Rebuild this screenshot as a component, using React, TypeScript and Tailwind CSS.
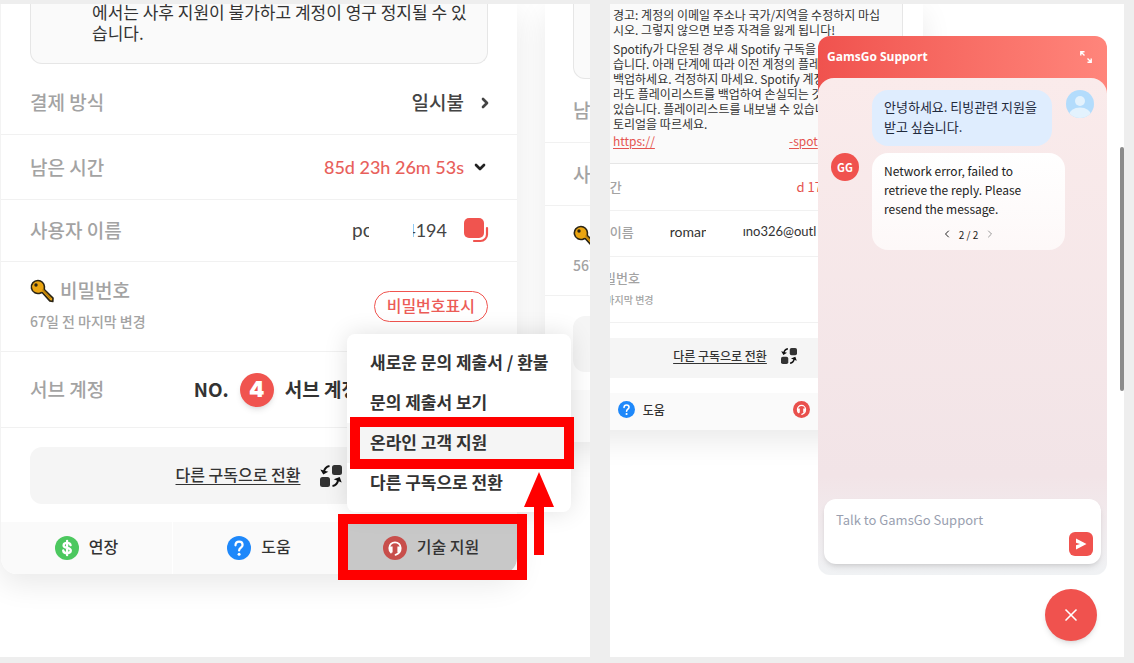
import { type ReactNode } from 'react'
import { ChevronDown, ChevronLeft, ChevronRight, X } from 'lucide-react'

function KeyIcon({ className }: { className: string }) {
  return (
    <svg viewBox="0 0 24 24" className={className} aria-hidden="true">
      <path
        d="M8 1.5a6.5 6.5 0 1 0 2.6 12.4l1.6-.4 7.6 8.4 3 .6.2-3.400-8.700-8.600.1-3A6.500 6.500 0 0 0 8 1.500z"
        fill="#eba510"
        stroke="#2a2415"
        strokeWidth="1.6"
        strokeLinejoin="round"
      />
      <path d="M12.500 10.500l8 9" stroke="#b87d08" strokeWidth="1.200" />
      <circle cx="6" cy="6" r="1.700" fill="#2a2415" />
    </svg>
  )
}

function SwapIcon({ className }: { className: string }) {
  return (
    <svg viewBox="0 0 22 22" className={className} aria-hidden="true">
      <rect x="12" y="0" width="10" height="10" rx="2.500" fill="#333" />
      <rect x="0" y="12" width="10" height="10" rx="2.500" fill="#333" />
      <path d="M9.500 1C6.500 1.500 4.500 3.500 3.800 7" fill="none" stroke="#111" strokeWidth="2" />
      <path d="M.3 4.500l3 5 5-2.800z" fill="#111" />
      <path d="M12.500 21c3-.5 5-2.500 5.700-6" fill="none" stroke="#111" strokeWidth="2" />
      <path d="M21.700 17.500l-2-5.500-6 2.300z" fill="#111" />
    </svg>
  )
}

function CopyIcon() {
  return (
    <svg viewBox="0 0 25 25" className="size-[25px]" aria-hidden="true">
      <rect x="0" y="0" width="20" height="20" rx="5" fill="#f0544f" />
      <path d="M23 10v6.500a6.500 6.500 0 0 1-6.500 6.500H10" fill="none" stroke="#f0544f" strokeWidth="2.200" strokeLinecap="round" />
    </svg>
  )
}

function DollarIcon({ className }: { className: string }) {
  return (
    <svg viewBox="0 0 24 24" className={className} aria-hidden="true">
      <circle cx="12" cy="12" r="12" fill="#4cc85f" />
      <path
        d="M15.600 9.200c-.3-1.500-1.700-2.300-3.500-2.300-2 0-3.500.9-3.500 2.500 0 3.500 7.200 1.600 7.200 5.200 0 1.700-1.700 2.600-3.700 2.600-2.100 0-3.700-1-3.900-2.700M12.100 4.800v14.400"
        fill="none"
        stroke="#fff"
        strokeWidth="2.300"
        strokeLinecap="round"
      />
    </svg>
  )
}

function HelpIcon({ className }: { className: string }) {
  return (
    <svg viewBox="0 0 24 24" className={className} aria-hidden="true">
      <circle cx="12" cy="12" r="12" fill="#1e88fa" />
      <path d="M8.500 9.300c0-2.200 1.500-3.700 3.600-3.700s3.500 1.400 3.500 3.300c0 2.600-3.500 2.700-3.500 5.600" fill="none" stroke="#fff" strokeWidth="2.200" strokeLinecap="round" />
      <circle cx="12.100" cy="18.300" r="1.500" fill="#fff" />
    </svg>
  )
}

function SupportIcon({ className, fill }: { className: string; fill: string }) {
  return (
    <svg viewBox="0 0 24 24" className={className} aria-hidden="true">
      <circle cx="12" cy="12" r="12" fill={fill} />
      <path d="M8 16.500C6.500 15.500 6.300 14 6.300 12a5.700 5.700 0 0 1 11.400 0c0 3-1.700 5.700-5.200 6.800" fill="none" stroke="#fff" strokeWidth="1.800" strokeLinecap="round" />
      <path d="M7 10.500h2.600v6C7.800 16.300 7 15 7 13.500zM14.400 10.500H17v3c0 1.500-.8 2.800-2.600 3z" fill="#fff" />
    </svg>
  )
}

function Row({ className, label, children }: { className: string; label: ReactNode; children?: ReactNode }) {
  return (
    <div className={`flex items-center justify-between border-b border-[#f1f1f1] ${className}`}>
      <div className="text-[#a3a3a3] font-medium whitespace-nowrap">{label}</div>
      {children}
    </div>
  )
}

const cardShadow = 'shadow-[0_10px_30px_rgba(0,0,0,0.09)]'

const menuItems = ['새로운 문의 제출서 / 환불', '문의 제출서 보기', '온라인 고객 지원', '다른 구독으로 전환']

function SupportMenu() {
  return (
    <ul className="absolute bottom-full -right-[54px] z-10 mb-[10px] w-56 rounded-lg bg-white py-[9px] shadow-[0_0_24px_rgba(0,0,0,0.12)]">
      {menuItems.map((item, i) => (
        <li key={item} className="relative">
          <button
            className={`h-10 w-full pb-[3px] pl-[23px] text-left text-[17px] font-bold whitespace-nowrap text-[#333] ${i === 2 ? 'bg-[#f5f5f5]' : ''}`}
          >
            {item}
          </button>
          {i === 2 && <span className="absolute -inset-y-[6px] left-[3px] -right-[3px] z-10 border-10 border-[#f00]" />}
        </li>
      ))}
    </ul>
  )
}

function AccountCard() {
  return (
    <article className={`relative z-10 w-[517px] shrink-0 rounded-b-2xl border-l border-[#f3f3f3] bg-white ${cardShadow}`}>
      <div className="mr-[29px] mb-[7px] ml-[29px] flex h-15 items-end rounded-b-xl border border-t-0 border-[#e6e6e6] bg-[#fafafa] pb-5 pl-[61px]">
        <p className="text-[17px] leading-[21px] whitespace-nowrap text-[#333]">
          에서는 사후 지원이 불가하고 계정이 영구 정지될 수 있
          <br />
          습니다.
        </p>
      </div>
      <Row className="h-16 pr-6 pl-[29px] text-[19px]" label="결제 방식">
        <button className="flex items-center gap-[13px] font-medium text-[#444]">
          일시불
          <ChevronRight className="size-4" strokeWidth={4} />
        </button>
      </Row>
      <Row className="h-[65px] pr-[29px] pl-[29px] text-[19px]" label="남은 시간">
        <button className="flex items-center gap-2 font-['Lato',sans-serif] text-[18px] font-medium text-[#e8605b]">
          85d 23h 26m 53s
          <ChevronDown className="size-4 text-[#222]" strokeWidth={4} />
        </button>
      </Row>
      <Row className="h-[62px] pr-7 pl-[29px] text-[19px]" label="사용자 이름">
        <div className="flex items-center font-['Lato',sans-serif] text-[#444]">
          <span className="mr-11 w-[17px] overflow-hidden">po</span>
          <span className="mr-[17px] flex w-[34px] justify-end overflow-hidden text-[18px]">4194</span>
          <button aria-label="복사">
            <CopyIcon />
          </button>
        </div>
      </Row>
      <Row
        className="h-[90px] pr-[29px] pl-[29px] text-[19px]"
        label={
          <>
            <div className="flex items-center gap-[6px]">
              <KeyIcon className="size-6" />
              비밀번호
            </div>
            <div className="text-sm leading-8">67일 전 마지막 변경</div>
          </>
        }
      >
        <button className="h-[31px] rounded-full border border-[#f0544f] px-3 pb-1 text-base font-medium text-[#ec5c57]">비밀번호표시</button>
      </Row>
      <Row className="h-[76px] pr-[158px] pl-[29px] text-[19px]" label="서브 계정">
        <div className="flex items-center gap-[11px] font-bold text-[#333]">
          NO.
          <span className="flex size-[34px] items-center justify-center rounded-full bg-[#f0544f] font-['Inter',sans-serif] text-[22px] font-black text-white shadow-md">
            4
          </span>
          서브 계정
        </div>
      </Row>
      <button className="mx-[29px] mt-[19px] mb-[18px] flex h-[57px] w-[458px] items-center justify-center gap-5 rounded-xl bg-[#f5f5f5] text-base font-medium text-[#333]">
        <span className="pb-1 underline underline-offset-3">다른 구독으로 전환</span>
        <SwapIcon className="size-[22px]" />
      </button>
      <footer className="grid h-13 grid-cols-3 rounded-b-2xl bg-[#fafafa] text-base font-medium text-[#333]">
        <button className="flex items-center justify-center gap-[10px] border-r border-white">
          <DollarIcon className="size-6" />
          <span className="pb-1">연장</span>
        </button>
        <button className="flex items-center justify-center gap-[10px]">
          <HelpIcon className="size-6" />
          <span className="pb-1">도움</span>
        </button>
        <div className="relative">
          <button className="flex size-full items-center justify-center gap-[10px] rounded-br-2xl bg-[#c8c8c8]">
            <SupportIcon className="size-6" fill="#c84e4b" />
            <span className="pb-1">기술 지원</span>
          </button>
          <SupportMenu />
          <span className="absolute -top-2 -right-[10px] -bottom-[6px] -left-[7px] z-10 border-10 border-[#f00]" />
          <svg viewBox="0 0 30 83" className="absolute -right-[37px] bottom-[19px] z-20 h-[83px] w-[30px]" aria-hidden="true">
            <path d="M15 0l15 35H20v48H10V35H0z" fill="#f00" />
          </svg>
        </div>
      </footer>
    </article>
  )
}

function NextCard() {
  return (
    <article className={`h-fit w-[517px] shrink-0 rounded-b-2xl bg-white ${cardShadow}`}>
      <div className="mx-7 h-[75px] rounded-b-xl border border-t-0 border-[#e6e6e6] bg-[#fafafa]" />
      <Row className="h-16 px-7 text-[19px]" label="남은 시간" />
      <Row className="h-[63px] px-7 text-[19px]" label="사용자 이름" />
      <Row
        className="h-[90px] px-7 text-[19px]"
        label={
          <>
            <KeyIcon className="mt-1 size-6" />
            <div className="text-sm leading-8">567일 전 마지막 변경</div>
          </>
        }
      />
      <div className="mx-7 mt-5 mb-[18px] h-14 rounded-xl bg-[#f5f5f5]" />
      <div className="h-13 rounded-b-2xl bg-[#fafafa]" />
    </article>
  )
}

function SpotifyCard() {
  return (
    <article className={`-ml-15 w-[373px] shrink-0 rounded-b-xl bg-white ${cardShadow}`}>
      <div className="mr-5 ml-[21px] h-40 rounded-b-lg border border-t-0 border-[#e6e6e6] bg-[#fafafa] pl-[41px] text-xs leading-[15px] whitespace-nowrap text-[#333]">
        <p className="pt-[3px] pb-1">
          경고: 계정의 이메일 주소나 국가/지역을 수정하지 마십
          <br />
          시오. 그렇지 않으면 보증 자격을 잃게 됩니다!
        </p>
        <p>
          Spotify가 다운된 경우 새 Spotify 구독을
          <br />
          습니다. 아래 단계에 따라 이전 계정의 플레
          <br />
          백업하세요. 걱정하지 마세요. Spotify 계정
          <br />
          라도 플레이리스트를 백업하여 손실되는 것
          <br />
          있습니다. 플레이리스트를 내보낼 수 있습니
          <br />
          토리얼을 따르세요.
        </p>
        <a href="#" className="mt-[2px] flex text-[#e5534f]">
          <span className="w-44 underline underline-offset-2">https://</span>
          <span className="underline underline-offset-2">-spot</span>
        </a>
      </div>
      <Row className="h-[47px] pr-[101px] pl-[21px] text-[13px]" label="남은 시간">
        <span className="text-[#e5534f]">d 17</span>
      </Row>
      <Row className="h-[46px] pb-1 pl-[21px] text-[13px]" label="사용자 이름">
        <div className="flex flex-1 font-['Lato',sans-serif] text-[#333]">
          <span className="ml-9 w-[73px]">
            <span className="block w-9 overflow-hidden text-sm">roman</span>
          </span>
          <span>ıno326@outl</span>
        </div>
      </Row>
      <Row
        className="h-[66px] pb-1 pl-[21px] text-[13px]"
        label={
          <>
            <div className="pl-[21px]">비밀번호</div>
            <div className="pt-1 text-[10px]">67일 전 마지막 변경</div>
          </>
        }
      />
      <button className="my-[15px] mr-5 ml-[21px] flex h-10 w-[332px] items-center justify-center gap-[14px] rounded-lg bg-[#f5f5f5] pr-1 pb-1 text-xs font-medium text-[#333]">
        <span className="underline underline-offset-2">다른 구독으로 전환</span>
        <SwapIcon className="size-4" />
      </button>
      <footer className="grid h-[37px] grid-cols-2 rounded-b-xl bg-[#fafafa] pb-1 text-xs font-medium text-[#333]">
        <button className="flex items-center justify-center gap-2 pr-1">
          <HelpIcon className="size-[17px]" />
          도움
        </button>
        <button className="flex items-center justify-center gap-[10px]">
          <SupportIcon className="size-[17px]" fill="#e9504c" />
          기술 지원
        </button>
      </footer>
    </article>
  )
}

function ChatWidget() {
  return (
    <section className="absolute top-8 right-[17px] bottom-[82px] flex w-[289px] flex-col overflow-hidden rounded-xl text-[13px]">
      <header className="flex h-15 items-center justify-between bg-linear-to-r from-[#f0524e] to-[#ff857b] pr-[15px] pb-[18px] pl-[9px] text-white">
        <h2 className="font-['Open_Sans','Noto_Sans_CJK_KR',sans-serif] text-xs font-bold">GamsGo Support</h2>
        <button aria-label="확대">
          <svg viewBox="0 0 12 12" className="size-3" fill="none" stroke="#fff" strokeWidth="1.400" aria-hidden="true">
            <path d="M.8 4.500V.8h3.700M1 1l3.500 3.500M7.500 11.200h3.700V7.500M11 11L7.500 7.500" />
          </svg>
        </button>
      </header>
      <div className="-mt-[18px] flex flex-1 flex-col rounded-t-2xl bg-linear-to-b from-[#faebeb] via-[#f2e4e7] via-80% to-[#f0f2f4] px-[6px] pt-3 pb-[11px]">
        <div className="flex items-start justify-end gap-[14px] pr-[7px]">
          <p className="w-[180px] rounded-2xl bg-[#dfedfe] px-3 pt-[7px] pb-[9px] leading-5 whitespace-nowrap text-[#1f2a3d]">
            안녕하세요. 티빙관련 지원을
            <br />
            받고 싶습니다.
          </p>
          <svg viewBox="0 0 28 28" className="size-7 shrink-0 rounded-full" aria-hidden="true">
            <rect width="28" height="28" fill="#b3dcfc" />
            <circle cx="14" cy="11" r="5" fill="#e3f2fd" />
            <ellipse cx="14" cy="25" rx="11" ry="7.500" fill="#e3f2fd" />
          </svg>
        </div>
        <div className="mt-[7px] flex items-start gap-[13px] pl-[7px]">
          <span className="flex size-7 shrink-0 items-center justify-center rounded-full bg-[#f0524e] text-[11px] font-bold text-white">GG</span>
          <div className="w-[193px] rounded-2xl bg-linear-to-b from-white to-[#fdf8f8] px-3 pt-2 pb-2 text-[#222]">
            <p className="text-xs leading-[19px] whitespace-nowrap">
              Network error, failed to
              <br />
              retrieve the reply. Please
              <br />
              resend the message.
            </p>
            <div className="mt-2 flex h-4 items-center justify-center gap-[6px] text-[10px]">
              <button aria-label="이전">
                <ChevronLeft className="size-3" />
              </button>
              2 / 2
              <button aria-label="다음">
                <ChevronRight className="size-3 text-[#999]" />
              </button>
            </div>
          </div>
        </div>
        <form className="mt-auto flex h-[65px] items-end rounded-xl bg-white pr-2 pb-2 shadow-md">
          <textarea
            aria-label="Talk to GamsGo Support"
            placeholder="Talk to GamsGo Support"
            className="h-full flex-1 resize-none pt-[11px] pl-3 leading-5 outline-none placeholder:text-[#9a9fb0]"
          />
          <button type="button" aria-label="보내기" className="flex size-6 items-center justify-center rounded-md bg-[#f0524e]">
            <svg viewBox="0 0 12 12" className="size-3" aria-hidden="true">
              <path d="M1 .5l10.500 5.500L1 11.500V7.200L5 6 1 4.800z" fill="#fff" />
            </svg>
          </button>
        </form>
      </div>
    </section>
  )
}

export default function App() {
  return (
    <main className="grid min-h-screen grid-cols-[590fr_514fr] gap-5 bg-[#eee] pt-1 pr-[10px] pb-[6px] font-['Noto_Sans_CJK_KR',sans-serif]">
      <section className="flex items-start gap-7 overflow-hidden bg-white">
        <AccountCard />
        <NextCard />
      </section>
      <section className="relative flex items-start overflow-hidden bg-white">
        <SpotifyCard />
        <ChatWidget />
        <button
          aria-label="닫기"
          className="absolute right-[27px] bottom-4 flex size-13 items-center justify-center rounded-full bg-[#f0524e] text-white shadow-md"
        >
          <X className="size-5" strokeWidth={2} />
        </button>
        <span className="absolute top-[143px] right-0 h-61 w-1 rounded-full bg-[#8b8b8b]" />
      </section>
    </main>
  )
}
